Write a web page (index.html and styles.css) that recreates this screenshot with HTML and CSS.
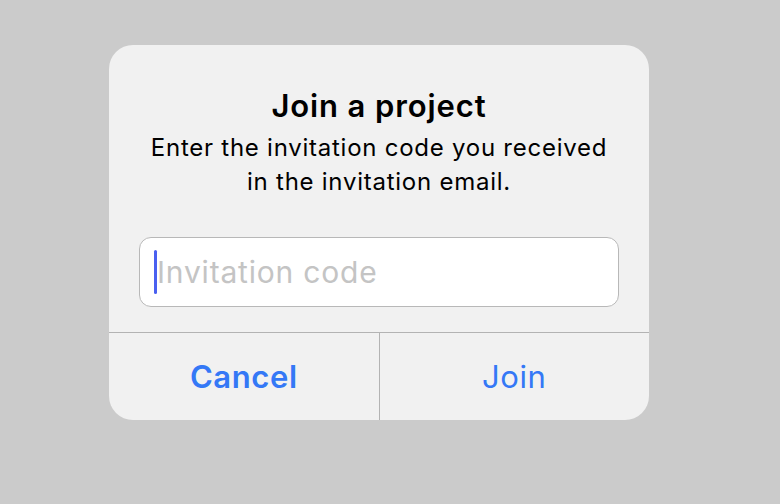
FILE: index.html
```html
<!DOCTYPE html>
<html lang="en">
<head>
    <meta charset="UTF-8">
    <meta name="viewport" content="width=device-width, initial-scale=1.0">
    <title>Join a project</title>
    <link rel="stylesheet" href="styles.css">
</head>
<body>
    <div class="alert">
        <div class="alert-body">
            <h1 class="alert-title">Join a project</h1>
            <p class="alert-message">Enter the invitation code you received<br>in the invitation email.</p>
            <div class="field">
                <span class="caret"></span>
                <span class="placeholder">Invitation code</span>
            </div>
        </div>
        <div class="alert-actions">
            <button class="action action-cancel">Cancel</button>
            <button class="action">Join</button>
        </div>
    </div>
</body>
</html>
```

FILE: styles.css
```css
body {
    margin: 0;
    background: #cbcbcb;
    font-family: Inter, "Noto Sans", sans-serif;
    height: 504px;
    overflow: hidden;
}
.alert {
    width: 540px;
    margin: 45px 0 0 109px;
    background: #f1f1f1;
    border-radius: 24px;
    overflow: hidden;
}
.alert-body {
    display: flex;
    flex-direction: column;
    align-items: center;
    padding: 43px 20px 25px;
}
.alert-title {
    margin: 0;
    font-size: 31px;
    font-weight: 600;
    line-height: 36px;
    letter-spacing: 0.9px;
    color: #000;
}
.alert-message {
    margin: 7px 0 0;
    font-size: 24px;
    line-height: 34px;
    letter-spacing: 0.75px;
    text-align: center;
    color: #000;
}
.field {
    box-sizing: border-box;
    width: 480px;
    height: 70px;
    margin-top: 38px;
    background: #fff;
    border: 1px solid #b8b8b8;
    border-radius: 12px;
    display: flex;
    align-items: center;
    padding-left: 14px;
}
.caret {
    width: 3px;
    height: 44px;
    border-radius: 2px;
    background: #4a60f0;
}
.placeholder {
    font-size: 30px;
    letter-spacing: 0.8px;
    color: #c4c4c4;
}
.alert-actions {
    display: flex;
    border-top: 1px solid #b3b3b3;
}
.action {
    flex: 1;
    height: 87px;
    border: none;
    background: transparent;
    font-family: inherit;
    font-size: 31px;
    letter-spacing: 0.6px;
    color: #3478f6;
    padding: 0;
}
.action + .action {
    border-left: 1px solid #b3b3b3;
}
.action-cancel {
    font-weight: 600;
}
```
